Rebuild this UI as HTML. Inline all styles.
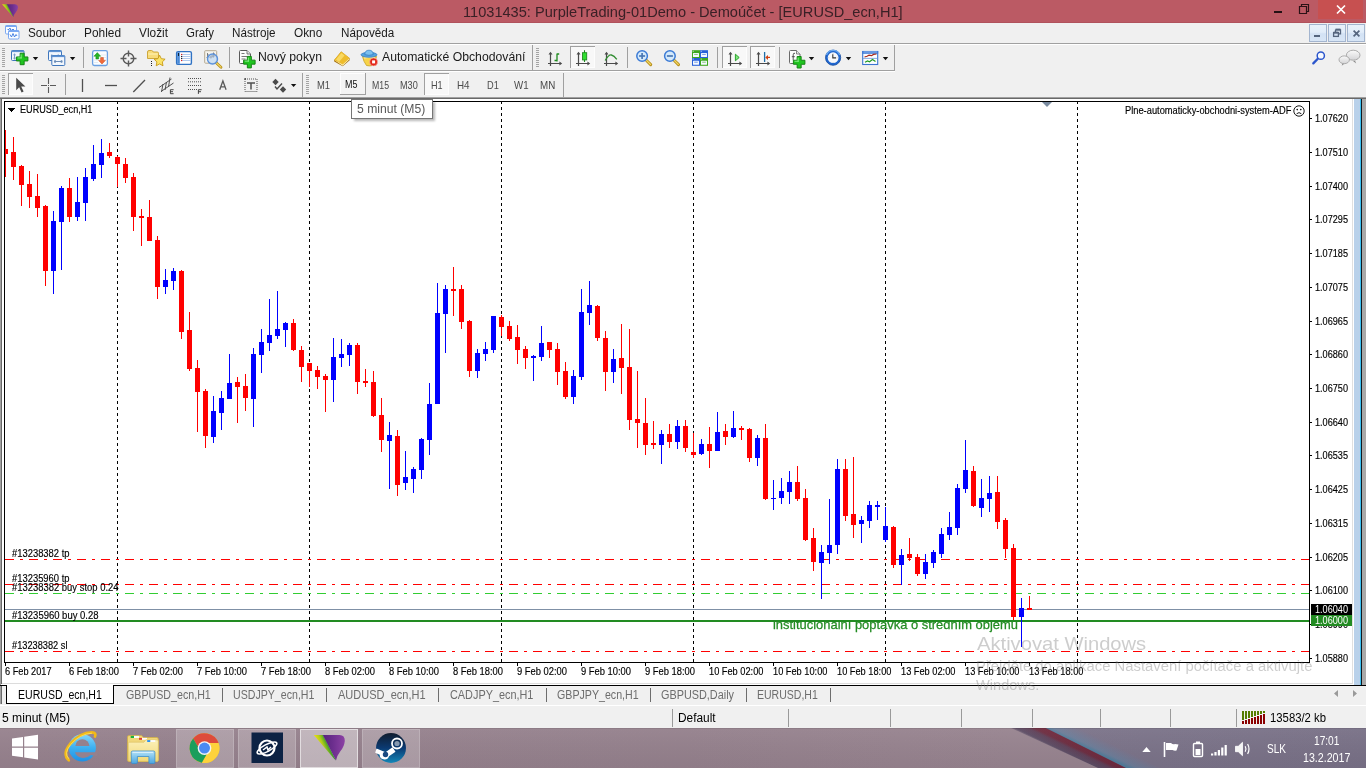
<!DOCTYPE html>
<html><head><meta charset="utf-8"><title>MT4</title>
<style>
*{margin:0;padding:0;box-sizing:border-box}
html,body{width:1366px;height:768px;overflow:hidden;background:#f0f0f0;font-family:"Liberation Sans",sans-serif}
#root{position:relative;width:1366px;height:768px;overflow:hidden;background:#f0f0f0}
.t{position:absolute;white-space:nowrap;line-height:1;transform-origin:0 50%;display:block}
.r{position:absolute}
svg{position:absolute;overflow:visible}
</style></head><body><div id="root">

<div class="r" style="left:0px;top:0px;width:1366px;height:23px;background:#bb5a64;"></div>
<div class="r" style="left:0px;top:22px;width:1366px;height:1px;background:#b0525c;"></div>
<svg style="left:2px;top:4px" width="17" height="14" viewBox="0 0 17 14" ><defs><linearGradient id="apg" x1="0" x2="1" y1="0" y2="0"><stop offset="0" stop-color="#55247a"/><stop offset="0.5" stop-color="#6c2e8e"/><stop offset="1" stop-color="#8c42a4"/></linearGradient>
<linearGradient id="apy" gradientUnits="userSpaceOnUse" x1="1" y1="3" x2="6" y2="0.5"><stop offset="0" stop-color="#ece010"/><stop offset="0.45" stop-color="#b4cc18"/><stop offset="1" stop-color="#2a962c"/></linearGradient></defs>
<path d="M0 0.200H5L11.500 12.900L10.800 12.500z" fill="url(#apy)"/>
<path d="M4.900 0.200H12.500Q16.200 0.300 16 3.600Q15.700 6.400 13.700 8.600Q12 10.500 11.500 12.900z" fill="url(#apg)"/></svg>
<span class="t" style="left:462.80px;top:4px;font-size:15px;color:#3a2026;transform:scaleX(0.9728);">11031435: PurpleTrading-01Demo - Demoúčet - [EURUSD_ecn,H1]</span>
<div class="r" style="left:1274px;top:11px;width:8px;height:2px;background:#241014;"></div>
<svg style="left:1298px;top:3px" width="13" height="12" viewBox="0 0 13 12"><path d="M1.5 3.5h7v7h-7z M3.5 3.5v-2h7v7h-2" fill="none" stroke="#2a1216" stroke-width="1.2"/></svg>
<div class="r" style="left:1318px;top:0px;width:45px;height:19px;background:#c75050;"></div>
<svg style="left:1336px;top:5px" width="10" height="9" viewBox="0 0 10 9"><path d="M1 0.5L9 8.5M9 0.5L1 8.5" stroke="#fff" stroke-width="1.7" fill="none"/></svg>
<div class="r" style="left:0px;top:23px;width:1366px;height:20px;background:#f0f0f0;"></div>
<svg style="left:5px;top:25px" width="15" height="15" viewBox="0 0 15 15" ><rect x="0.5" y="0.5" width="11" height="8.500" rx="1.200" fill="#fbfdff" stroke="#5a92ee" stroke-width="0.800"/>
<rect x="0.500" y="0.500" width="11" height="1.500" fill="#7aa8f2"/>
<path d="M2.500 4.500l1.500 0 1-1.500 1 3 1-1.500h2" fill="none" stroke="#3a78e0" stroke-width="0.900"/>
<rect x="3.500" y="5.500" width="10.500" height="8.500" rx="1.200" fill="#fbfdff" stroke="#5a92ee" stroke-width="0.800"/>
<rect x="3.500" y="5.500" width="10.500" height="1.500" fill="#7aa8f2"/>
<path d="M5 9.500l1.500 2.500 1.500-3.500 1.500 3.500 1.500-2.500 1 1.500" fill="none" stroke="#3a78e0" stroke-width="0.900"/></svg>
<span class="t" style="left:28.00px;top:27px;font-size:12.5px;color:#1a1a1a;transform:scaleX(0.9427);">Soubor</span>
<span class="t" style="left:84.00px;top:27px;font-size:12.5px;color:#1a1a1a;transform:scaleX(0.9506);">Pohled</span>
<span class="t" style="left:139.00px;top:27px;font-size:12.5px;color:#1a1a1a;transform:scaleX(0.9487);">Vložit</span>
<span class="t" style="left:186.00px;top:27px;font-size:12.5px;color:#1a1a1a;transform:scaleX(0.9162);">Grafy</span>
<span class="t" style="left:232.00px;top:27px;font-size:12.5px;color:#1a1a1a;transform:scaleX(0.9345);">Nástroje</span>
<span class="t" style="left:294.40px;top:27px;font-size:12.5px;color:#1a1a1a;transform:scaleX(0.9439);">Okno</span>
<span class="t" style="left:341.40px;top:27px;font-size:12.5px;color:#1a1a1a;transform:scaleX(0.9335);">Nápověda</span>
<div class="r" style="left:1309px;top:24px;width:18px;height:18px;background:linear-gradient(#e8f1fb 0%,#e2edf9 45%,#d3e2f4 55%,#d8e6f6 100%);border:1px solid #a3b5cf"></div>
<div class="r" style="left:1328px;top:24px;width:18px;height:18px;background:linear-gradient(#e8f1fb 0%,#e2edf9 45%,#d3e2f4 55%,#d8e6f6 100%);border:1px solid #a3b5cf"></div>
<div class="r" style="left:1347px;top:24px;width:18px;height:18px;background:linear-gradient(#e8f1fb 0%,#e2edf9 45%,#d3e2f4 55%,#d8e6f6 100%);border:1px solid #a3b5cf"></div>
<div class="r" style="left:1314px;top:35px;width:6px;height:2px;background:#55657e;"></div>
<svg style="left:1332px;top:28px" width="10" height="10" viewBox="0 0 10 10"><path d="M3.500 1.800h5v4h-1.500 M3.500 4v-2.200" fill="none" stroke="#55657e" stroke-width="1.300"/><path d="M3.500 1.500h5" stroke="#55657e" stroke-width="1.800"/><rect x="1.600" y="4.600" width="4.800" height="3.800" fill="none" stroke="#55657e" stroke-width="1.300"/><path d="M1.600 4.600h4.800" stroke="#55657e" stroke-width="1.900"/></svg>
<svg style="left:1353px;top:30px" width="7" height="7" viewBox="0 0 7 7"><path d="M0.600 0.600L6.400 6.400M6.400 0.600L0.600 6.400" stroke="#55657e" stroke-width="1.700" fill="none"/></svg>
<div class="r" style="left:0px;top:43px;width:1366px;height:1px;background:#a0a0a0;"></div>
<div class="r" style="left:0px;top:44px;width:1366px;height:1px;background:#ffffff;"></div>
<div class="r" style="left:0px;top:70px;width:895px;height:1px;background:#a0a0a0;"></div>
<div class="r" style="left:0px;top:71px;width:895px;height:1px;background:#ffffff;"></div>
<div class="r" style="left:894px;top:45px;width:1px;height:26px;background:#a0a0a0;"></div>
<svg style="left:0;top:0" width="900" height="72" viewBox="0 0 900 72"><rect x="2" y="48" width="3" height="1" fill="#a4a4a4"/><rect x="2" y="50" width="3" height="1" fill="#a4a4a4"/><rect x="2" y="52" width="3" height="1" fill="#a4a4a4"/><rect x="2" y="54" width="3" height="1" fill="#a4a4a4"/><rect x="2" y="56" width="3" height="1" fill="#a4a4a4"/><rect x="2" y="58" width="3" height="1" fill="#a4a4a4"/><rect x="2" y="60" width="3" height="1" fill="#a4a4a4"/><rect x="2" y="62" width="3" height="1" fill="#a4a4a4"/><rect x="2" y="64" width="3" height="1" fill="#a4a4a4"/><rect x="2" y="66" width="3" height="1" fill="#a4a4a4"/><rect x="11.5" y="50.5" width="12.500" height="10" rx="1" fill="#f2f7fd" stroke="#3f76bc"/><rect x="11.500" y="50.500" width="12.500" height="1.600" fill="#5f92d2"/><path d="M14.500 54v5" stroke="#7a9cc6" stroke-width="1"/><path d="M13 55.200L14.500 53.200L16 55.200z M13 57.800L14.500 59.800L16 57.800z" fill="#7a9cc6"/><path d="M20.15 53.2h4v3.75h3.75v4h-3.75v3.75h-4v-3.75h-3.75v-4h3.75z" fill="#1fc41f" stroke="#158515" stroke-width="1" stroke-linejoin="round"/><path d="M21.15 54.400000000000006v4.05M17.599999999999998 57.95h4.05" stroke="#8ff08f" stroke-width="0.9" fill="none"/><path d="M32.8 57h5.400l-2.700 3.200z" fill="#111"/><rect x="48.5" y="50.5" width="13" height="10" rx="1" fill="#f2f7fd" stroke="#3f76bc"/><rect x="48.500" y="50.500" width="13" height="1.600" fill="#5f92d2"/><path d="M51.5 56H58.5" stroke="#6a8cb8" stroke-width="1"/><path d="M52.5 54.5L50.5 56L52.5 57.5z M57.5 54.5L59.5 56L57.5 57.5z" fill="#6a8cb8"/><path d="M51.500 54.500v3M58.500 54.500v3" stroke="#6a8cb8" stroke-width="0.800"/><rect x="51.800" y="55.500" width="13" height="10" rx="1" fill="#f2f7fd" stroke="#3f76bc"/><rect x="51.800" y="55.500" width="13" height="1.600" fill="#5f92d2"/><path d="M54.8 61.5H61.8" stroke="#6a8cb8" stroke-width="1"/><path d="M55.8 60.0L53.8 61.5L55.8 63.0z M60.8 60.0L62.8 61.5L60.8 63.0z" fill="#6a8cb8"/><path d="M54.800 60v3M61.800 60v3" stroke="#6a8cb8" stroke-width="0.800"/><path d="M69.9 57h5.400l-2.700 3.200z" fill="#111"/><rect x="83" y="47" width="1" height="21" fill="#a0a0a0"/><rect x="92.600" y="50.700" width="14.800" height="14.800" rx="1.800" fill="#fbfdff" stroke="#6aa0e2" stroke-width="1.300"/><path d="M101 55h5m-5 2.500h5m-5 2.500h5M94 60h4m-4 2.500h4" stroke="#dde6f0" stroke-width="0.800"/><path d="M97.300 52.600l3.400 3.600h-2v2.800h-2.800v-2.800h-2z" fill="#25b425" stroke="#178a17" stroke-width="0.500"/><path d="M102 64l-3.400-3.600h2v-2.800h2.800v2.800h2z" fill="#f26a3a" stroke="#c84818" stroke-width="0.500"/><circle cx="128.500" cy="58.500" r="5.300" fill="none" stroke="#5a5a5a" stroke-width="1.400"/><path d="M128.500 50.500v6m0 4v6M120.500 58.500h6m4 0h6" stroke="#5a5a5a" stroke-width="1.400"/><path d="M147.500 58.500v-6.500q0-1.500 1.500-1.500h2.500q1.200 0 1.800 1.500h4q1.200 0 1.200 1.200v5.300z" fill="#f8dc7a" stroke="#c9a030" stroke-width="0.900"/><path d="M148.200 54h9.600" stroke="#fff3b8" stroke-width="1"/><path d="M151.500 61v5.500" stroke="#222" stroke-width="1" stroke-dasharray="1 1"/><path d="M159.600 55.200l1.700 3.500 3.800.5-2.800 2.700.7 3.900-3.400-1.900-3.400 1.900.7-3.900-2.800-2.700 3.800-.5z" fill="#fbe468" stroke="#c89a14" stroke-width="0.900" stroke-linejoin="round"/><rect x="176.600" y="51.600" width="14.800" height="12.800" rx="1.500" fill="#ffffff" stroke="#2f72c4" stroke-width="1.400"/><rect x="177.200" y="52.200" width="2.600" height="11.600" fill="#4a8ad8"/><rect x="178" y="53" width="1" height="3" fill="#123"/><path d="M181.500 54.500h9m-9 2h9m-9 2h9m-9 2h9" stroke="#9cbce8" stroke-width="0.800"/><rect x="181" y="53.900" width="1.200" height="1.200" fill="#e02020"/><rect x="181" y="55.900" width="1.200" height="1.200" fill="#222"/><rect x="181" y="57.900" width="1.200" height="1.200" fill="#222"/><rect x="181" y="59.900" width="1.200" height="1.200" fill="#e02020"/><rect x="204.700" y="50.700" width="12" height="12.500" rx="0.800" fill="#f6f4ee" stroke="#b4a890" stroke-width="1"/><path d="M207.500 53v6m-1-1.500h1m0-3h1 M213.500 52.500v5m-1-1h1m0-3h1" stroke="#666" stroke-width="0.800" fill="none"/><path d="M216.200 62.700l4.800 4.500" stroke="#b8901c" stroke-width="2.800" stroke-linecap="round"/><path d="M216.400 62.900l4.500 4.200" stroke="#f4da66" stroke-width="1.200" stroke-linecap="round"/><circle cx="212.500" cy="59" r="5" fill="#c6dcf4" fill-opacity="0.800" stroke="#5b92dc" stroke-width="1.400"/><path d="M210 58q2-3 4.500-1.500" stroke="#8a98a8" stroke-width="2.500" fill="none" stroke-opacity="0.600"/><rect x="229" y="47" width="1" height="21" fill="#a0a0a0"/><path d="M239.500 51.500q0-1 1-1h6.500l3.500 3.500v8.500q0 1-1 1h-9q-1 0-1-1z" fill="#fdfdfd" stroke="#5a5a5a" stroke-width="1"/><path d="M247 50.500v3.500h3.500" fill="#e8e8e8" stroke="#5a5a5a" stroke-width="0.800"/><path d="M241.500 53.500h3m-3 3h6m-6 2.500h4" stroke="#777" stroke-width="1"/><path d="M247.35 56.4h4v3.75h3.75v4h-3.75v3.75h-4v-3.75h-3.75v-4h3.75z" fill="#1fc41f" stroke="#158515" stroke-width="1" stroke-linejoin="round"/><path d="M248.35 57.6v4.05M244.79999999999998 61.15h4.05" stroke="#8ff08f" stroke-width="0.9" fill="none"/><path d="M334.200 59.900L341.200 51.500L349.700 58.300L349.700 60.300L342.700 66.200L334.200 61.600z" fill="#a87410"/><path d="M335 60.600L342 52.600L349.700 58.900L342.700 65.700z" fill="#fdf3c0"/><path d="M334.200 59.900L341.200 51.500L349.700 58.300L342.700 64.600z" fill="#eebc2c"/><path d="M336 59.600L341.400 53L344.500 55.500L339 62z" fill="#fbe070" fill-opacity="0.800"/><path d="M362.500 56.500q7-3 14 0q-1 5-4 9q-3 .800-6 0q-3-4-4-9z" fill="#f7d348" stroke="#c8a020" stroke-width="0.800"/><path d="M364 58q5-1.500 11 0" stroke="#fbeb9a" stroke-width="1.500" fill="none"/><ellipse cx="369" cy="54.800" rx="8" ry="2.500" fill="#56a4e0" stroke="#2e78c0" stroke-width="0.700"/><path d="M364.800 54.600q0-4.400 4.200-4.400t4.200 4.400q-4.200 1.400-8.400 0z" fill="#7cc0ee" stroke="#2e78c0" stroke-width="0.700"/><circle cx="373.600" cy="61.900" r="4" fill="#e32618" stroke="#f8c0b8" stroke-width="0.600"/><rect x="372.100" y="60.400" width="3" height="3" fill="#fff"/><rect x="532" y="45" width="1" height="26" fill="#a0a0a0"/><rect x="536" y="48" width="3" height="1" fill="#a4a4a4"/><rect x="536" y="50" width="3" height="1" fill="#a4a4a4"/><rect x="536" y="52" width="3" height="1" fill="#a4a4a4"/><rect x="536" y="54" width="3" height="1" fill="#a4a4a4"/><rect x="536" y="56" width="3" height="1" fill="#a4a4a4"/><rect x="536" y="58" width="3" height="1" fill="#a4a4a4"/><rect x="536" y="60" width="3" height="1" fill="#a4a4a4"/><rect x="536" y="62" width="3" height="1" fill="#a4a4a4"/><rect x="536" y="64" width="3" height="1" fill="#a4a4a4"/><rect x="536" y="66" width="3" height="1" fill="#a4a4a4"/><path d="M550.5 53V66.1 M548 63.5H561" stroke="#4a4a4a" stroke-width="1.2" fill="none"/><path d="M548.5 54.6L550.5 51.8L552.5 54.6z M559.4 61.5L562.2 63.5L559.4 65.5z" fill="#4a4a4a"/><path d="M557 53.500v8m-2.500-1h2.500m0-6.500h2.200" stroke="#1e8a1e" stroke-width="1.300" fill="none"/><rect x="570" y="46" width="25" height="22" fill="#f8f8f8"/><rect x="570" y="46" width="25" height="1" fill="#a0a0a0"/><rect x="570" y="46" width="1" height="22" fill="#a0a0a0"/><rect x="594" y="47" width="1" height="21" fill="#fdfdfd"/><rect x="571" y="67" width="24" height="1" fill="#fdfdfd"/><path d="M578.5 53V66.1 M576 63.5H589" stroke="#4a4a4a" stroke-width="1.2" fill="none"/><path d="M576.5 54.6L578.5 51.8L580.5 54.6z M587.4 61.5L590.2 63.5L587.4 65.5z" fill="#4a4a4a"/><path d="M584.500 50.200v11.800" stroke="#1e8a1e" stroke-width="1.100"/><rect x="582.500" y="52.700" width="4.200" height="7.200" fill="#2fe02f" stroke="#1e8a1e" stroke-width="0.900"/><path d="M606.5 53V66.1 M604 63.5H617" stroke="#4a4a4a" stroke-width="1.2" fill="none"/><path d="M604.5 54.6L606.5 51.8L608.5 54.6z M615.4 61.5L618.2 63.5L615.4 65.5z" fill="#4a4a4a"/><path d="M605.200 60.500q3.500-6 6.200-5.500t5.400 4.400" stroke="#2e8b2e" stroke-width="1.300" fill="none"/><rect x="627" y="47" width="1" height="21" fill="#a0a0a0"/><path d="M646.3000000000001 60.2L650.7 64.6" stroke="#b8901c" stroke-width="3" stroke-linecap="round"/><path d="M646.5 60.4L650.5 64.4" stroke="#f4da66" stroke-width="1.300" stroke-linecap="round"/><circle cx="642.1" cy="56" r="5.300" fill="#d4e9fb" stroke="#3b7bd6" stroke-width="1.500"/><path d="M639.1 56h6" stroke="#4a78b4" stroke-width="1.700"/><path d="M642.1 53v6" stroke="#4a78b4" stroke-width="1.700"/><path d="M674.1 60.2L678.5 64.6" stroke="#b8901c" stroke-width="3" stroke-linecap="round"/><path d="M674.3 60.4L678.3 64.4" stroke="#f4da66" stroke-width="1.300" stroke-linecap="round"/><circle cx="669.9" cy="56" r="5.300" fill="#d4e9fb" stroke="#3b7bd6" stroke-width="1.500"/><path d="M666.9 56h6" stroke="#4a78b4" stroke-width="1.700"/><rect x="692" y="50.2" width="8" height="7.800" fill="#3fa81f"/><rect x="692.7" y="50.800000000000004" width="1" height="1" fill="#fff" fill-opacity="0.800"/><rect x="693" y="53.0" width="6" height="4" rx="0.500" fill="#f4f9ff"/><path d="M694.2 54.400000000000006h3.600" stroke="#3fa81f" stroke-width="0.900" stroke-opacity="0.700"/><rect x="700" y="50.2" width="8" height="7.800" fill="#2860d8"/><rect x="700.7" y="50.800000000000004" width="1" height="1" fill="#fff" fill-opacity="0.800"/><rect x="701" y="53.0" width="6" height="4" rx="0.500" fill="#f4f9ff"/><path d="M702.2 54.400000000000006h3.600" stroke="#2860d8" stroke-width="0.900" stroke-opacity="0.700"/><rect x="692" y="58" width="8" height="7.800" fill="#2860d8"/><rect x="692.7" y="58.6" width="1" height="1" fill="#fff" fill-opacity="0.800"/><rect x="693" y="60.8" width="6" height="4" rx="0.500" fill="#f4f9ff"/><path d="M694.2 62.2h3.600" stroke="#2860d8" stroke-width="0.900" stroke-opacity="0.700"/><rect x="700" y="58" width="8" height="7.800" fill="#3fa81f"/><rect x="700.7" y="58.6" width="1" height="1" fill="#fff" fill-opacity="0.800"/><rect x="701" y="60.8" width="6" height="4" rx="0.500" fill="#f4f9ff"/><path d="M702.2 62.2h3.600" stroke="#3fa81f" stroke-width="0.900" stroke-opacity="0.700"/><rect x="717" y="47" width="1" height="21" fill="#a0a0a0"/><rect x="722" y="46" width="25" height="22" fill="#f8f8f8"/><rect x="722" y="46" width="25" height="1" fill="#a0a0a0"/><rect x="722" y="46" width="1" height="22" fill="#a0a0a0"/><rect x="746" y="47" width="1" height="21" fill="#fdfdfd"/><rect x="723" y="67" width="24" height="1" fill="#fdfdfd"/><path d="M730.5 53V66.1 M728 63.5H741" stroke="#4a4a4a" stroke-width="1.2" fill="none"/><path d="M728.5 54.6L730.5 51.8L732.5 54.6z M739.4 61.5L742.2 63.5L739.4 65.5z" fill="#4a4a4a"/><path d="M735.400 54.200l3.800 3.300-3.800 3.300z" fill="#7fe87f" stroke="#1e9a1e" stroke-width="0.900"/><rect x="750" y="46" width="25" height="22" fill="#f8f8f8"/><rect x="750" y="46" width="25" height="1" fill="#a0a0a0"/><rect x="750" y="46" width="1" height="22" fill="#a0a0a0"/><rect x="774" y="47" width="1" height="21" fill="#fdfdfd"/><rect x="751" y="67" width="24" height="1" fill="#fdfdfd"/><path d="M758.5 53V66.1 M756 63.5H769" stroke="#4a4a4a" stroke-width="1.2" fill="none"/><path d="M756.5 54.6L758.5 51.8L760.5 54.6z M767.4 61.5L770.2 63.5L767.4 65.5z" fill="#4a4a4a"/><path d="M764.600 52v10" stroke="#1f6fa8" stroke-width="1.300"/><path d="M770 57.400h-3.500" stroke="#d04010" stroke-width="1.200"/><path d="M768 54.900L765.300 57.400L768 59.900z" fill="#d04010"/><rect x="779" y="47" width="1" height="21" fill="#a0a0a0"/><path d="M789.500 51.500q0-1 1-1h6l3.500 3.500v8.500q0 1-1 1h-8.500q-1 0-1-1z" fill="#fdfdfd" stroke="#6a6a6a" stroke-width="1"/><path d="M796.500 50.500v3.500h3.500" fill="#e8e8e8" stroke="#6a6a6a" stroke-width="0.800"/><path d="M795 53.300q-1.800-.600-1.800 1.500v5.500m-1.400-3.600h3" stroke="#444" stroke-width="0.900" fill="none"/><path d="M797.15 56.5h4v3.75h3.75v4h-3.75v3.75h-4v-3.75h-3.75v-4h3.75z" fill="#1fc41f" stroke="#158515" stroke-width="1" stroke-linejoin="round"/><path d="M798.15 57.7v4.05M794.6 61.25h4.05" stroke="#8ff08f" stroke-width="0.9" fill="none"/><path d="M808.8 57h5.400l-2.700 3.200z" fill="#111"/><circle cx="833.100" cy="57.700" r="7.600" fill="#1f66d0" stroke="#154a9c" stroke-width="0.800"/><path d="M826.500 55a7 7 0 0 1 13.200 0" stroke="#6aa8f0" stroke-width="1.200" fill="none"/><circle cx="833.100" cy="57.700" r="5.400" fill="#f6f8fb"/><path d="M833.100 53v.800m0 8.200v.800m-4.700-5.100h.800m8.200 0h.800" stroke="#b0b8c4" stroke-width="0.700"/><path d="M832.800 54.300v3.600h3.300" stroke="#333" stroke-width="1.100" fill="none"/><path d="M845.8 57h5.400l-2.700 3.200z" fill="#111"/><rect x="862.700" y="51.500" width="15" height="13" fill="#fbfdff" stroke="#3a74d0" stroke-width="1.100"/><rect x="862.200" y="51" width="16" height="2.800" fill="#3f7ad6"/><rect x="863.500" y="51.600" width="13.500" height="0.800" fill="#a8c8f4"/><path d="M863 58.400h14.500" stroke="#6a98d8" stroke-width="0.800"/><path d="M864.500 57l2.500-.800 2-1 2.500.500 2-1.300 3-.400" stroke="#a82818" stroke-width="1.200" fill="none"/><path d="M865 62.200l2.500-1.200 2 .800 3-2.200 3 2" stroke="#229a22" stroke-width="1.200" fill="none"/><path d="M882.8 57h5.400l-2.700 3.200z" fill="#111"/></svg>
<span class="t" style="left:257.60px;top:51px;font-size:12px;color:#1a1a1a;transform:scaleX(1.0208);">Nový pokyn</span>
<span class="t" style="left:382.00px;top:51px;font-size:12px;color:#1a1a1a;transform:scaleX(1.0188);">Automatické Obchodování</span>
<svg style="left:1312px;top:50.5px" width="14" height="15" viewBox="0 0 14 15" ><path d="M1.300 12.400L5.800 7.800" stroke="#2c56cc" stroke-width="2.300" stroke-linecap="round"/><circle cx="8.800" cy="4.700" r="3.600" fill="#f6f9ff" stroke="#2c56cc" stroke-width="1.500"/></svg><svg style="left:1338px;top:49px" width="24" height="18" viewBox="0 0 24 18" ><defs><linearGradient id="chg" x1="0" x2="0" y1="0" y2="1"><stop offset="0" stop-color="#fafafa"/><stop offset="1" stop-color="#d4d4d6"/></linearGradient></defs><path d="M17 11.800l1.200 2.600-3.200-2.400z" fill="#8a8a8a"/><ellipse cx="15.200" cy="6.200" rx="6.800" ry="5" fill="url(#chg)" stroke="#a4a4a4" stroke-width="0.900"/><path d="M4.500 14.200l-.800 2.600 3-2.200z" fill="#8a8a8a"/><ellipse cx="6.200" cy="10.800" rx="5.200" ry="3.900" fill="url(#chg)" stroke="#a4a4a4" stroke-width="0.900"/></svg>
<svg style="left:0;top:0" width="900" height="99" viewBox="0 0 900 99"><rect x="2" y="75" width="3" height="1" fill="#a4a4a4"/><rect x="2" y="77" width="3" height="1" fill="#a4a4a4"/><rect x="2" y="79" width="3" height="1" fill="#a4a4a4"/><rect x="2" y="81" width="3" height="1" fill="#a4a4a4"/><rect x="2" y="83" width="3" height="1" fill="#a4a4a4"/><rect x="2" y="85" width="3" height="1" fill="#a4a4a4"/><rect x="2" y="87" width="3" height="1" fill="#a4a4a4"/><rect x="2" y="89" width="3" height="1" fill="#a4a4a4"/><rect x="2" y="91" width="3" height="1" fill="#a4a4a4"/><rect x="2" y="93" width="3" height="1" fill="#a4a4a4"/><rect x="8" y="73" width="25" height="22" fill="#f8f8f8"/><rect x="8" y="73" width="25" height="1" fill="#a0a0a0"/><rect x="8" y="73" width="1" height="22" fill="#a0a0a0"/><rect x="32" y="74" width="1" height="21" fill="#fdfdfd"/><rect x="9" y="94" width="24" height="1" fill="#fdfdfd"/><path d="M16.200 77.800v12.400l3-2.900 2.400 5.200 2-1-2.400-5h4.200z" fill="#4a4a4a"/><path d="M48.500 78v6m0 3v6M41 85.500h6m3 0h6" stroke="#5a5a5a" stroke-width="1.100"/><rect x="48" y="85" width="1" height="1" fill="#5a5a5a"/><rect x="65" y="74" width="1" height="21" fill="#a0a0a0"/><path d="M82.500 79v13" stroke="#505050" stroke-width="1.300"/><path d="M105 85.500h12" stroke="#505050" stroke-width="1.300"/><path d="M133.300 92L145 80" stroke="#505050" stroke-width="1.300"/><path d="M159 87.500l12.500-8.500M161 91.500l12.500-8.500" stroke="#505050" stroke-width="1"/><path d="M163 84l-1.500 8m5-10l-1.500 8m5-12.500l-1.500 9.500" stroke="#505050" stroke-width="1"/><path d="M173.600 89.700h-3.200v4h3.200m-3.200-2h2.600" stroke="#333" stroke-width="0.900" fill="none"/><path d="M188 78.500h13m-13 3.300h13m-13 3.700h13m-13 4h9" stroke="#505050" stroke-width="1" stroke-dasharray="1 1"/><path d="M201.600 89.700h-3.200v4.200m0-2.200h2.600" stroke="#333" stroke-width="0.900" fill="none"/><path d="M219.700 89.800l3.200-8.800 3.200 8.800m-5.300-3h4.200" stroke="#5a5a5a" stroke-width="1.300" fill="none"/><rect x="245" y="79" width="12" height="12.500" fill="none" stroke="#505050" stroke-width="1" stroke-dasharray="1 1"/><path d="M247 83h8m-4 0v6.500" stroke="#505050" stroke-width="1.500" fill="none"/><rect x="244.300" y="78.300" width="1.600" height="1.200" fill="#333"/><path d="M275.500 78.800l3.200 3.200-3.200 3.200-3.200-3.200z" fill="#4a4a4a"/><path d="M283 86.300l3.200 3.200-3.200 3.200-3.200-3.200z" fill="#4a4a4a"/><path d="M275 86.500l2 2.500 5-5.500" stroke="#4a4a4a" stroke-width="1.400" fill="none"/><path d="M290.9 83.9h5.400l-2.700 3.200z" fill="#111"/><rect x="302" y="73" width="1" height="24" fill="#a0a0a0"/><rect x="306" y="75" width="3" height="1" fill="#a4a4a4"/><rect x="306" y="77" width="3" height="1" fill="#a4a4a4"/><rect x="306" y="79" width="3" height="1" fill="#a4a4a4"/><rect x="306" y="81" width="3" height="1" fill="#a4a4a4"/><rect x="306" y="83" width="3" height="1" fill="#a4a4a4"/><rect x="306" y="85" width="3" height="1" fill="#a4a4a4"/><rect x="306" y="87" width="3" height="1" fill="#a4a4a4"/><rect x="306" y="89" width="3" height="1" fill="#a4a4a4"/><rect x="306" y="91" width="3" height="1" fill="#a4a4a4"/><rect x="306" y="93" width="3" height="1" fill="#a4a4a4"/><rect x="340" y="73" width="26" height="22" fill="#f4f4f4"/><rect x="340" y="73" width="26" height="1" fill="#fdfdfd"/><rect x="340" y="73" width="1" height="22" fill="#fdfdfd"/><rect x="365" y="73" width="1" height="22" fill="#a0a0a0"/><rect x="340" y="94" width="26" height="1" fill="#a0a0a0"/><rect x="424" y="73" width="25" height="22" fill="#f8f8f8"/><rect x="424" y="73" width="25" height="1" fill="#a0a0a0"/><rect x="424" y="73" width="1" height="22" fill="#a0a0a0"/><rect x="448" y="74" width="1" height="21" fill="#fdfdfd"/><rect x="425" y="94" width="24" height="1" fill="#fdfdfd"/><rect x="563" y="73" width="1" height="24" fill="#a0a0a0"/></svg>
<span class="t" style="left:317.40px;top:80px;font-size:10.5px;color:#4a4a4a;transform:scaleX(0.8912);">M1</span>
<span class="t" style="left:344.60px;top:79px;font-size:10.5px;color:#111;transform:scaleX(0.8501);">M5</span>
<span class="t" style="left:372.00px;top:80px;font-size:10.5px;color:#4a4a4a;transform:scaleX(0.8322);">M15</span>
<span class="t" style="left:399.60px;top:80px;font-size:10.5px;color:#4a4a4a;transform:scaleX(0.8714);">M30</span>
<span class="t" style="left:431.00px;top:80px;font-size:10.5px;color:#4a4a4a;transform:scaleX(0.8642);">H1</span>
<span class="t" style="left:457.40px;top:80px;font-size:10.5px;color:#4a4a4a;transform:scaleX(0.9387);">H4</span>
<span class="t" style="left:486.60px;top:80px;font-size:10.5px;color:#4a4a4a;transform:scaleX(0.8791);">D1</span>
<span class="t" style="left:514.00px;top:80px;font-size:10.5px;color:#4a4a4a;transform:scaleX(0.9270);">W1</span>
<span class="t" style="left:540.40px;top:80px;font-size:10.5px;color:#4a4a4a;transform:scaleX(0.9308);">MN</span>
<div class="r" style="left:0px;top:97px;width:1366px;height:1px;background:#a0a0a0;"></div>
<div class="r" style="left:0px;top:98px;width:1366px;height:1px;background:#696969;"></div>
<div class="r" style="left:0px;top:99px;width:1354px;height:586px;background:#ffffff;"></div>
<div class="r" style="left:2px;top:683px;width:1351px;height:1px;background:#dcdcdc;"></div>
<div class="r" style="left:2px;top:684px;width:1352px;height:1px;background:#ffffff;"></div>
<div class="r" style="left:0px;top:99px;width:1px;height:586px;background:#a0a0a0;"></div>
<div class="r" style="left:1px;top:99px;width:1px;height:585px;background:#696969;"></div>
<div class="r" style="left:1354px;top:99px;width:6px;height:586px;background:#b9d1ea;"></div>
<div class="r" style="left:1360px;top:99px;width:1px;height:586px;background:#3cc0f0;"></div>
<div class="r" style="left:1352px;top:99px;width:1px;height:585px;background:#e0e0e0;"></div>
<div class="r" style="left:1353px;top:99px;width:1px;height:586px;background:#ffffff;"></div>
<div class="r" style="left:1361px;top:99px;width:1px;height:586px;background:#101820;"></div>
<div class="r" style="left:1362px;top:99px;width:4px;height:586px;background:#a9a9a9;"></div>
<svg style="left:0;top:0" width="1366" height="768" viewBox="0 0 1366 768" shape-rendering="crispEdges">
<line x1="117.5" y1="101" x2="117.5" y2="662" stroke="#000" stroke-width="1" stroke-dasharray="3 3"/>
<line x1="309.5" y1="101" x2="309.5" y2="662" stroke="#000" stroke-width="1" stroke-dasharray="3 3"/>
<line x1="501.5" y1="101" x2="501.5" y2="662" stroke="#000" stroke-width="1" stroke-dasharray="3 3"/>
<line x1="693.5" y1="101" x2="693.5" y2="662" stroke="#000" stroke-width="1" stroke-dasharray="3 3"/>
<line x1="885.5" y1="101" x2="885.5" y2="662" stroke="#000" stroke-width="1" stroke-dasharray="3 3"/>
<line x1="1077.5" y1="101" x2="1077.5" y2="662" stroke="#000" stroke-width="1" stroke-dasharray="3 3"/>
<line x1="5" y1="559.5" x2="1309" y2="559.5" stroke="#ff0000" stroke-width="1" stroke-dasharray="9 6 3 6"/>
<line x1="5" y1="584.5" x2="1309" y2="584.5" stroke="#ff0000" stroke-width="1" stroke-dasharray="9 6 3 6"/>
<line x1="5" y1="651.5" x2="1309" y2="651.5" stroke="#ff0000" stroke-width="1" stroke-dasharray="9 6 3 6"/>
<line x1="5" y1="593.5" x2="1309" y2="593.5" stroke="#32cd32" stroke-width="1" stroke-dasharray="9 6 3 6"/>
<rect x="5" y="609" width="1304" height="1" fill="#7f90a6"/>
<rect x="5" y="620" width="1304" height="2" fill="#228b22"/>
<rect x="5" y="130" width="1" height="47" fill="#ff0000"/>
<rect x="5" y="149" width="3" height="5" fill="#ff0000"/>
<rect x="13" y="137" width="1" height="43" fill="#ff0000"/>
<rect x="11" y="152" width="5" height="15" fill="#ff0000"/>
<rect x="21" y="165" width="1" height="41" fill="#ff0000"/>
<rect x="19" y="166" width="5" height="19" fill="#ff0000"/>
<rect x="29" y="171" width="1" height="37" fill="#ff0000"/>
<rect x="27" y="184" width="5" height="13" fill="#ff0000"/>
<rect x="37" y="174" width="1" height="43" fill="#ff0000"/>
<rect x="35" y="196" width="5" height="12" fill="#ff0000"/>
<rect x="45" y="205" width="1" height="81" fill="#ff0000"/>
<rect x="43" y="206" width="5" height="65" fill="#ff0000"/>
<rect x="53" y="211" width="1" height="83" fill="#0000ff"/>
<rect x="51" y="221" width="5" height="50" fill="#0000ff"/>
<rect x="61" y="186" width="1" height="84" fill="#0000ff"/>
<rect x="59" y="188" width="5" height="34" fill="#0000ff"/>
<rect x="69" y="178" width="1" height="44" fill="#ff0000"/>
<rect x="67" y="188" width="5" height="29" fill="#ff0000"/>
<rect x="77" y="177" width="1" height="44" fill="#0000ff"/>
<rect x="75" y="202" width="5" height="15" fill="#0000ff"/>
<rect x="85" y="168" width="1" height="53" fill="#0000ff"/>
<rect x="83" y="177" width="5" height="26" fill="#0000ff"/>
<rect x="93" y="145" width="1" height="36" fill="#0000ff"/>
<rect x="91" y="164" width="5" height="15" fill="#0000ff"/>
<rect x="101" y="139" width="1" height="39" fill="#0000ff"/>
<rect x="99" y="153" width="5" height="12" fill="#0000ff"/>
<rect x="109" y="143" width="1" height="15" fill="#ff0000"/>
<rect x="107" y="152" width="5" height="4" fill="#ff0000"/>
<rect x="117" y="156" width="1" height="31" fill="#ff0000"/>
<rect x="115" y="157" width="5" height="7" fill="#ff0000"/>
<rect x="125" y="158" width="1" height="25" fill="#ff0000"/>
<rect x="123" y="164" width="5" height="14" fill="#ff0000"/>
<rect x="133" y="173" width="1" height="58" fill="#ff0000"/>
<rect x="131" y="177" width="5" height="40" fill="#ff0000"/>
<rect x="141" y="209" width="1" height="37" fill="#ff0000"/>
<rect x="139" y="216" width="5" height="2" fill="#ff0000"/>
<rect x="149" y="200" width="1" height="41" fill="#ff0000"/>
<rect x="147" y="217" width="5" height="24" fill="#ff0000"/>
<rect x="157" y="236" width="1" height="63" fill="#ff0000"/>
<rect x="155" y="240" width="5" height="47" fill="#ff0000"/>
<rect x="165" y="269" width="1" height="25" fill="#0000ff"/>
<rect x="163" y="280" width="5" height="7" fill="#0000ff"/>
<rect x="173" y="268" width="1" height="22" fill="#0000ff"/>
<rect x="171" y="271" width="5" height="10" fill="#0000ff"/>
<rect x="181" y="270" width="1" height="69" fill="#ff0000"/>
<rect x="179" y="271" width="5" height="61" fill="#ff0000"/>
<rect x="189" y="312" width="1" height="59" fill="#ff0000"/>
<rect x="187" y="330" width="5" height="39" fill="#ff0000"/>
<rect x="197" y="360" width="1" height="72" fill="#ff0000"/>
<rect x="195" y="368" width="5" height="24" fill="#ff0000"/>
<rect x="205" y="389" width="1" height="59" fill="#ff0000"/>
<rect x="203" y="391" width="5" height="45" fill="#ff0000"/>
<rect x="213" y="396" width="1" height="47" fill="#0000ff"/>
<rect x="211" y="411" width="5" height="26" fill="#0000ff"/>
<rect x="221" y="391" width="1" height="39" fill="#0000ff"/>
<rect x="219" y="398" width="5" height="15" fill="#0000ff"/>
<rect x="229" y="354" width="1" height="45" fill="#0000ff"/>
<rect x="227" y="383" width="5" height="16" fill="#0000ff"/>
<rect x="237" y="377" width="1" height="46" fill="#ff0000"/>
<rect x="235" y="382" width="5" height="5" fill="#ff0000"/>
<rect x="245" y="374" width="1" height="37" fill="#ff0000"/>
<rect x="243" y="386" width="5" height="12" fill="#ff0000"/>
<rect x="253" y="348" width="1" height="79" fill="#0000ff"/>
<rect x="251" y="354" width="5" height="45" fill="#0000ff"/>
<rect x="261" y="329" width="1" height="44" fill="#0000ff"/>
<rect x="259" y="342" width="5" height="13" fill="#0000ff"/>
<rect x="269" y="299" width="1" height="52" fill="#0000ff"/>
<rect x="267" y="335" width="5" height="8" fill="#0000ff"/>
<rect x="277" y="291" width="1" height="48" fill="#0000ff"/>
<rect x="275" y="329" width="5" height="7" fill="#0000ff"/>
<rect x="285" y="322" width="1" height="25" fill="#0000ff"/>
<rect x="283" y="323" width="5" height="7" fill="#0000ff"/>
<rect x="293" y="319" width="1" height="32" fill="#ff0000"/>
<rect x="291" y="323" width="5" height="27" fill="#ff0000"/>
<rect x="301" y="346" width="1" height="36" fill="#ff0000"/>
<rect x="299" y="350" width="5" height="17" fill="#ff0000"/>
<rect x="309" y="363" width="1" height="24" fill="#ff0000"/>
<rect x="307" y="363" width="5" height="8" fill="#ff0000"/>
<rect x="317" y="366" width="1" height="23" fill="#ff0000"/>
<rect x="315" y="370" width="5" height="7" fill="#ff0000"/>
<rect x="325" y="374" width="1" height="38" fill="#ff0000"/>
<rect x="323" y="376" width="5" height="4" fill="#ff0000"/>
<rect x="333" y="338" width="1" height="64" fill="#0000ff"/>
<rect x="331" y="357" width="5" height="23" fill="#0000ff"/>
<rect x="341" y="339" width="1" height="28" fill="#0000ff"/>
<rect x="339" y="354" width="5" height="4" fill="#0000ff"/>
<rect x="349" y="343" width="1" height="23" fill="#0000ff"/>
<rect x="347" y="345" width="5" height="10" fill="#0000ff"/>
<rect x="357" y="343" width="1" height="51" fill="#ff0000"/>
<rect x="355" y="345" width="5" height="37" fill="#ff0000"/>
<rect x="365" y="369" width="1" height="18" fill="#ff0000"/>
<rect x="363" y="381" width="5" height="2" fill="#ff0000"/>
<rect x="373" y="371" width="1" height="46" fill="#ff0000"/>
<rect x="371" y="382" width="5" height="34" fill="#ff0000"/>
<rect x="381" y="398" width="1" height="54" fill="#ff0000"/>
<rect x="379" y="415" width="5" height="25" fill="#ff0000"/>
<rect x="389" y="422" width="1" height="67" fill="#0000ff"/>
<rect x="387" y="435" width="5" height="6" fill="#0000ff"/>
<rect x="397" y="430" width="1" height="66" fill="#ff0000"/>
<rect x="395" y="436" width="5" height="49" fill="#ff0000"/>
<rect x="405" y="451" width="1" height="39" fill="#0000ff"/>
<rect x="403" y="477" width="5" height="6" fill="#0000ff"/>
<rect x="413" y="467" width="1" height="26" fill="#0000ff"/>
<rect x="411" y="469" width="5" height="10" fill="#0000ff"/>
<rect x="421" y="438" width="1" height="41" fill="#0000ff"/>
<rect x="419" y="439" width="5" height="31" fill="#0000ff"/>
<rect x="429" y="383" width="1" height="72" fill="#0000ff"/>
<rect x="427" y="404" width="5" height="36" fill="#0000ff"/>
<rect x="437" y="283" width="1" height="121" fill="#0000ff"/>
<rect x="435" y="313" width="5" height="91" fill="#0000ff"/>
<rect x="445" y="285" width="1" height="68" fill="#0000ff"/>
<rect x="443" y="289" width="5" height="25" fill="#0000ff"/>
<rect x="453" y="267" width="1" height="49" fill="#ff0000"/>
<rect x="451" y="289" width="5" height="2" fill="#ff0000"/>
<rect x="461" y="285" width="1" height="44" fill="#ff0000"/>
<rect x="459" y="289" width="5" height="33" fill="#ff0000"/>
<rect x="469" y="320" width="1" height="57" fill="#ff0000"/>
<rect x="467" y="321" width="5" height="50" fill="#ff0000"/>
<rect x="477" y="349" width="1" height="29" fill="#0000ff"/>
<rect x="475" y="353" width="5" height="18" fill="#0000ff"/>
<rect x="485" y="342" width="1" height="19" fill="#0000ff"/>
<rect x="483" y="349" width="5" height="5" fill="#0000ff"/>
<rect x="493" y="316" width="1" height="37" fill="#0000ff"/>
<rect x="491" y="316" width="5" height="34" fill="#0000ff"/>
<rect x="501" y="315" width="1" height="21" fill="#ff0000"/>
<rect x="499" y="317" width="5" height="10" fill="#ff0000"/>
<rect x="509" y="321" width="1" height="20" fill="#ff0000"/>
<rect x="507" y="326" width="5" height="13" fill="#ff0000"/>
<rect x="517" y="325" width="1" height="39" fill="#ff0000"/>
<rect x="515" y="337" width="5" height="13" fill="#ff0000"/>
<rect x="525" y="346" width="1" height="23" fill="#ff0000"/>
<rect x="523" y="349" width="5" height="9" fill="#ff0000"/>
<rect x="533" y="355" width="1" height="26" fill="#0000ff"/>
<rect x="531" y="356" width="5" height="2" fill="#0000ff"/>
<rect x="541" y="326" width="1" height="35" fill="#0000ff"/>
<rect x="539" y="343" width="5" height="14" fill="#0000ff"/>
<rect x="549" y="342" width="1" height="16" fill="#ff0000"/>
<rect x="547" y="342" width="5" height="8" fill="#ff0000"/>
<rect x="557" y="343" width="1" height="42" fill="#ff0000"/>
<rect x="555" y="349" width="5" height="23" fill="#ff0000"/>
<rect x="565" y="362" width="1" height="37" fill="#ff0000"/>
<rect x="563" y="371" width="5" height="26" fill="#ff0000"/>
<rect x="573" y="370" width="1" height="34" fill="#0000ff"/>
<rect x="571" y="376" width="5" height="21" fill="#0000ff"/>
<rect x="581" y="289" width="1" height="91" fill="#0000ff"/>
<rect x="579" y="312" width="5" height="65" fill="#0000ff"/>
<rect x="589" y="281" width="1" height="44" fill="#0000ff"/>
<rect x="587" y="305" width="5" height="8" fill="#0000ff"/>
<rect x="597" y="305" width="1" height="36" fill="#ff0000"/>
<rect x="595" y="306" width="5" height="32" fill="#ff0000"/>
<rect x="605" y="331" width="1" height="60" fill="#ff0000"/>
<rect x="603" y="338" width="5" height="34" fill="#ff0000"/>
<rect x="613" y="349" width="1" height="34" fill="#0000ff"/>
<rect x="611" y="359" width="5" height="13" fill="#0000ff"/>
<rect x="621" y="324" width="1" height="70" fill="#ff0000"/>
<rect x="619" y="358" width="5" height="10" fill="#ff0000"/>
<rect x="629" y="329" width="1" height="101" fill="#ff0000"/>
<rect x="627" y="367" width="5" height="53" fill="#ff0000"/>
<rect x="637" y="371" width="1" height="77" fill="#ff0000"/>
<rect x="635" y="419" width="5" height="4" fill="#ff0000"/>
<rect x="645" y="398" width="1" height="57" fill="#ff0000"/>
<rect x="643" y="423" width="5" height="22" fill="#ff0000"/>
<rect x="653" y="421" width="1" height="28" fill="#ff0000"/>
<rect x="651" y="443" width="5" height="2" fill="#ff0000"/>
<rect x="661" y="430" width="1" height="34" fill="#0000ff"/>
<rect x="659" y="434" width="5" height="11" fill="#0000ff"/>
<rect x="669" y="424" width="1" height="24" fill="#ff0000"/>
<rect x="667" y="434" width="5" height="8" fill="#ff0000"/>
<rect x="677" y="420" width="1" height="29" fill="#0000ff"/>
<rect x="675" y="426" width="5" height="16" fill="#0000ff"/>
<rect x="685" y="420" width="1" height="32" fill="#ff0000"/>
<rect x="683" y="426" width="5" height="22" fill="#ff0000"/>
<rect x="693" y="433" width="1" height="25" fill="#ff0000"/>
<rect x="691" y="452" width="5" height="3" fill="#ff0000"/>
<rect x="701" y="439" width="1" height="16" fill="#0000ff"/>
<rect x="699" y="444" width="5" height="10" fill="#0000ff"/>
<rect x="709" y="427" width="1" height="41" fill="#ff0000"/>
<rect x="707" y="444" width="5" height="7" fill="#ff0000"/>
<rect x="717" y="412" width="1" height="39" fill="#0000ff"/>
<rect x="715" y="432" width="5" height="19" fill="#0000ff"/>
<rect x="725" y="424" width="1" height="21" fill="#ff0000"/>
<rect x="723" y="431" width="5" height="6" fill="#ff0000"/>
<rect x="733" y="411" width="1" height="27" fill="#0000ff"/>
<rect x="731" y="428" width="5" height="9" fill="#0000ff"/>
<rect x="741" y="426" width="1" height="14" fill="#ff0000"/>
<rect x="739" y="428" width="5" height="2" fill="#ff0000"/>
<rect x="749" y="428" width="1" height="34" fill="#ff0000"/>
<rect x="747" y="429" width="5" height="29" fill="#ff0000"/>
<rect x="757" y="435" width="1" height="31" fill="#0000ff"/>
<rect x="755" y="438" width="5" height="20" fill="#0000ff"/>
<rect x="765" y="424" width="1" height="76" fill="#ff0000"/>
<rect x="763" y="438" width="5" height="61" fill="#ff0000"/>
<rect x="773" y="480" width="1" height="30" fill="#0000ff"/>
<rect x="771" y="498" width="5" height="1" fill="#0000ff"/>
<rect x="781" y="478" width="1" height="26" fill="#0000ff"/>
<rect x="779" y="491" width="5" height="7" fill="#0000ff"/>
<rect x="789" y="471" width="1" height="33" fill="#0000ff"/>
<rect x="787" y="482" width="5" height="10" fill="#0000ff"/>
<rect x="797" y="466" width="1" height="35" fill="#ff0000"/>
<rect x="795" y="482" width="5" height="17" fill="#ff0000"/>
<rect x="805" y="489" width="1" height="52" fill="#ff0000"/>
<rect x="803" y="498" width="5" height="42" fill="#ff0000"/>
<rect x="813" y="528" width="1" height="43" fill="#ff0000"/>
<rect x="811" y="538" width="5" height="24" fill="#ff0000"/>
<rect x="821" y="545" width="1" height="54" fill="#0000ff"/>
<rect x="819" y="552" width="5" height="11" fill="#0000ff"/>
<rect x="829" y="499" width="1" height="65" fill="#0000ff"/>
<rect x="827" y="545" width="5" height="8" fill="#0000ff"/>
<rect x="837" y="459" width="1" height="95" fill="#0000ff"/>
<rect x="835" y="469" width="5" height="76" fill="#0000ff"/>
<rect x="845" y="459" width="1" height="62" fill="#ff0000"/>
<rect x="843" y="469" width="5" height="47" fill="#ff0000"/>
<rect x="853" y="457" width="1" height="81" fill="#ff0000"/>
<rect x="851" y="514" width="5" height="11" fill="#ff0000"/>
<rect x="861" y="516" width="1" height="27" fill="#0000ff"/>
<rect x="859" y="520" width="5" height="4" fill="#0000ff"/>
<rect x="869" y="501" width="1" height="27" fill="#0000ff"/>
<rect x="867" y="505" width="5" height="16" fill="#0000ff"/>
<rect x="877" y="501" width="1" height="19" fill="#0000ff"/>
<rect x="875" y="505" width="5" height="2" fill="#0000ff"/>
<rect x="885" y="507" width="1" height="35" fill="#0000ff"/>
<rect x="883" y="526" width="5" height="14" fill="#0000ff"/>
<rect x="893" y="526" width="1" height="42" fill="#ff0000"/>
<rect x="891" y="527" width="5" height="38" fill="#ff0000"/>
<rect x="901" y="549" width="1" height="36" fill="#0000ff"/>
<rect x="899" y="555" width="5" height="10" fill="#0000ff"/>
<rect x="909" y="538" width="1" height="23" fill="#ff0000"/>
<rect x="907" y="554" width="5" height="4" fill="#ff0000"/>
<rect x="917" y="554" width="1" height="22" fill="#ff0000"/>
<rect x="915" y="557" width="5" height="17" fill="#ff0000"/>
<rect x="925" y="554" width="1" height="25" fill="#0000ff"/>
<rect x="923" y="562" width="5" height="12" fill="#0000ff"/>
<rect x="933" y="550" width="1" height="18" fill="#0000ff"/>
<rect x="931" y="552" width="5" height="11" fill="#0000ff"/>
<rect x="941" y="528" width="1" height="30" fill="#0000ff"/>
<rect x="939" y="534" width="5" height="20" fill="#0000ff"/>
<rect x="949" y="512" width="1" height="28" fill="#0000ff"/>
<rect x="947" y="527" width="5" height="8" fill="#0000ff"/>
<rect x="957" y="484" width="1" height="51" fill="#0000ff"/>
<rect x="955" y="488" width="5" height="40" fill="#0000ff"/>
<rect x="965" y="440" width="1" height="53" fill="#0000ff"/>
<rect x="963" y="470" width="5" height="19" fill="#0000ff"/>
<rect x="973" y="466" width="1" height="41" fill="#ff0000"/>
<rect x="971" y="471" width="5" height="35" fill="#ff0000"/>
<rect x="981" y="479" width="1" height="38" fill="#0000ff"/>
<rect x="979" y="498" width="5" height="10" fill="#0000ff"/>
<rect x="989" y="476" width="1" height="36" fill="#0000ff"/>
<rect x="987" y="493" width="5" height="6" fill="#0000ff"/>
<rect x="997" y="476" width="1" height="53" fill="#ff0000"/>
<rect x="995" y="492" width="5" height="30" fill="#ff0000"/>
<rect x="1005" y="518" width="1" height="40" fill="#ff0000"/>
<rect x="1003" y="520" width="5" height="29" fill="#ff0000"/>
<rect x="1013" y="544" width="1" height="76" fill="#ff0000"/>
<rect x="1011" y="548" width="5" height="69" fill="#ff0000"/>
<rect x="1021" y="598" width="1" height="49" fill="#0000ff"/>
<rect x="1019" y="608" width="5" height="9" fill="#0000ff"/>
<rect x="1029" y="596" width="1" height="14" fill="#ff0000"/>
<rect x="1027" y="608" width="5" height="2" fill="#ff0000"/>
<path d="M4.5 662V101.5H1309.5V662.5H4" fill="none" stroke="#000" stroke-width="1"/>
<rect x="4" y="662" width="1306" height="1" fill="#000"/>
<path d="M1042 102h10l-5 5z" fill="#7a8ba0" shape-rendering="geometricPrecision"/>
<rect x="1310" y="118" width="2" height="1" fill="#000"/>
<rect x="1310" y="152" width="2" height="1" fill="#000"/>
<rect x="1310" y="186" width="2" height="1" fill="#000"/>
<rect x="1310" y="219" width="2" height="1" fill="#000"/>
<rect x="1310" y="253" width="2" height="1" fill="#000"/>
<rect x="1310" y="287" width="2" height="1" fill="#000"/>
<rect x="1310" y="321" width="2" height="1" fill="#000"/>
<rect x="1310" y="354" width="2" height="1" fill="#000"/>
<rect x="1310" y="388" width="2" height="1" fill="#000"/>
<rect x="1310" y="422" width="2" height="1" fill="#000"/>
<rect x="1310" y="455" width="2" height="1" fill="#000"/>
<rect x="1310" y="489" width="2" height="1" fill="#000"/>
<rect x="1310" y="523" width="2" height="1" fill="#000"/>
<rect x="1310" y="557" width="2" height="1" fill="#000"/>
<rect x="1310" y="590" width="2" height="1" fill="#000"/>
<rect x="1310" y="624" width="2" height="1" fill="#000"/>
<rect x="1310" y="658" width="2" height="1" fill="#000"/>
<rect x="5" y="663" width="1" height="3" fill="#000"/>
<rect x="69" y="663" width="1" height="3" fill="#000"/>
<rect x="133" y="663" width="1" height="3" fill="#000"/>
<rect x="197" y="663" width="1" height="3" fill="#000"/>
<rect x="261" y="663" width="1" height="3" fill="#000"/>
<rect x="325" y="663" width="1" height="3" fill="#000"/>
<rect x="389" y="663" width="1" height="3" fill="#000"/>
<rect x="453" y="663" width="1" height="3" fill="#000"/>
<rect x="517" y="663" width="1" height="3" fill="#000"/>
<rect x="581" y="663" width="1" height="3" fill="#000"/>
<rect x="645" y="663" width="1" height="3" fill="#000"/>
<rect x="709" y="663" width="1" height="3" fill="#000"/>
<rect x="773" y="663" width="1" height="3" fill="#000"/>
<rect x="837" y="663" width="1" height="3" fill="#000"/>
<rect x="901" y="663" width="1" height="3" fill="#000"/>
<rect x="965" y="663" width="1" height="3" fill="#000"/>
<rect x="1029" y="663" width="1" height="3" fill="#000"/>
</svg>
<div class="r" style="left:8px;top:108px;width:7px;height:1px;background:#000;"></div>
<div class="r" style="left:9px;top:109px;width:5px;height:1px;background:#000;"></div>
<div class="r" style="left:10px;top:110px;width:3px;height:1px;background:#000;"></div>
<div class="r" style="left:11px;top:111px;width:1px;height:1px;background:#000;"></div>
<span class="t" style="left:20.20px;top:105px;font-size:10px;color:#000;transform:scaleX(0.9110);-webkit-text-stroke:0.15px #000;">EURUSD_ecn,H1</span>
<span class="t" style="left:1124.60px;top:106px;font-size:10px;color:#000;transform:scaleX(0.9298);-webkit-text-stroke:0.15px #000;">Plne-automaticky-obchodni-system-ADF</span>
<svg style="left:1293px;top:105px" width="12" height="12" viewBox="0 0 12 12"><circle cx="6" cy="6" r="5.2" fill="none" stroke="#000" stroke-width="0.9"/><circle cx="4.2" cy="4.6" r="0.8"/><circle cx="7.8" cy="4.6" r="0.8"/><path d="M3.6 8.8Q6 6.4 8.4 8.8" fill="none" stroke="#000" stroke-width="0.9"/></svg>
<span class="t" style="left:1315.40px;top:114px;font-size:10px;color:#000;transform:scaleX(0.9129);-webkit-text-stroke:0.15px #000;">1.07620</span>
<span class="t" style="left:1315.40px;top:148px;font-size:10px;color:#000;transform:scaleX(0.9129);-webkit-text-stroke:0.15px #000;">1.07510</span>
<span class="t" style="left:1315.40px;top:182px;font-size:10px;color:#000;transform:scaleX(0.9129);-webkit-text-stroke:0.15px #000;">1.07400</span>
<span class="t" style="left:1315.40px;top:215px;font-size:10px;color:#000;transform:scaleX(0.9129);-webkit-text-stroke:0.15px #000;">1.07295</span>
<span class="t" style="left:1315.40px;top:249px;font-size:10px;color:#000;transform:scaleX(0.9129);-webkit-text-stroke:0.15px #000;">1.07185</span>
<span class="t" style="left:1315.40px;top:283px;font-size:10px;color:#000;transform:scaleX(0.9129);-webkit-text-stroke:0.15px #000;">1.07075</span>
<span class="t" style="left:1315.40px;top:317px;font-size:10px;color:#000;transform:scaleX(0.9129);-webkit-text-stroke:0.15px #000;">1.06965</span>
<span class="t" style="left:1315.40px;top:350px;font-size:10px;color:#000;transform:scaleX(0.9129);-webkit-text-stroke:0.15px #000;">1.06860</span>
<span class="t" style="left:1315.40px;top:384px;font-size:10px;color:#000;transform:scaleX(0.9129);-webkit-text-stroke:0.15px #000;">1.06750</span>
<span class="t" style="left:1315.40px;top:418px;font-size:10px;color:#000;transform:scaleX(0.9129);-webkit-text-stroke:0.15px #000;">1.06640</span>
<span class="t" style="left:1315.40px;top:451px;font-size:10px;color:#000;transform:scaleX(0.9129);-webkit-text-stroke:0.15px #000;">1.06535</span>
<span class="t" style="left:1315.40px;top:485px;font-size:10px;color:#000;transform:scaleX(0.9129);-webkit-text-stroke:0.15px #000;">1.06425</span>
<span class="t" style="left:1315.40px;top:519px;font-size:10px;color:#000;transform:scaleX(0.9129);-webkit-text-stroke:0.15px #000;">1.06315</span>
<span class="t" style="left:1315.40px;top:553px;font-size:10px;color:#000;transform:scaleX(0.9129);-webkit-text-stroke:0.15px #000;">1.06205</span>
<span class="t" style="left:1315.40px;top:586px;font-size:10px;color:#000;transform:scaleX(0.9129);-webkit-text-stroke:0.15px #000;">1.06100</span>
<span class="t" style="left:1315.40px;top:620px;font-size:10px;color:#000;transform:scaleX(0.9129);-webkit-text-stroke:0.15px #000;">1.05990</span>
<span class="t" style="left:1315.40px;top:654px;font-size:10px;color:#000;transform:scaleX(0.9129);-webkit-text-stroke:0.15px #000;">1.05880</span>
<div class="r" style="left:1311px;top:604px;width:41px;height:11px;background:#000;"></div>
<span class="t" style="left:1315.40px;top:605px;font-size:10px;color:#fff;transform:scaleX(0.9129);">1.06040</span>
<div class="r" style="left:1311px;top:615px;width:41px;height:11px;background:#228b22;"></div>
<span class="t" style="left:1315.40px;top:616px;font-size:10px;color:#fff;transform:scaleX(0.9129);">1.06000</span>
<span class="t" style="left:11.50px;top:549px;font-size:10px;color:#000;transform:scaleX(0.9400);-webkit-text-stroke:0.15px #000;">#13238382 tp</span>
<span class="t" style="left:11.50px;top:574px;font-size:10px;color:#000;transform:scaleX(0.9400);-webkit-text-stroke:0.15px #000;">#13235960 tp</span>
<span class="t" style="left:11.50px;top:583px;font-size:10px;color:#000;transform:scaleX(0.9435);-webkit-text-stroke:0.15px #000;">#13238382 buy stop 0.24</span>
<span class="t" style="left:11.50px;top:611px;font-size:10px;color:#000;transform:scaleX(0.9485);-webkit-text-stroke:0.15px #000;">#13235960 buy 0.28</span>
<span class="t" style="left:11.50px;top:641px;font-size:10px;color:#000;transform:scaleX(0.9241);-webkit-text-stroke:0.15px #000;">#13238382 sl</span>
<span class="t" style="left:773.00px;top:618px;font-size:13px;color:#228b22;transform:scaleX(0.9942);-webkit-text-stroke:0.25px #228b22;">institucionální poptávka o středním objemu</span>
<span class="t" style="left:5.10px;top:667px;font-size:10px;color:#000;transform:scaleX(0.9210);-webkit-text-stroke:0.15px #000;">6 Feb 2017</span>
<span class="t" style="left:69.10px;top:667px;font-size:10px;color:#000;transform:scaleX(0.9368);-webkit-text-stroke:0.15px #000;">6 Feb 18:00</span>
<span class="t" style="left:133.10px;top:667px;font-size:10px;color:#000;transform:scaleX(0.9368);-webkit-text-stroke:0.15px #000;">7 Feb 02:00</span>
<span class="t" style="left:197.10px;top:667px;font-size:10px;color:#000;transform:scaleX(0.9368);-webkit-text-stroke:0.15px #000;">7 Feb 10:00</span>
<span class="t" style="left:261.10px;top:667px;font-size:10px;color:#000;transform:scaleX(0.9368);-webkit-text-stroke:0.15px #000;">7 Feb 18:00</span>
<span class="t" style="left:325.10px;top:667px;font-size:10px;color:#000;transform:scaleX(0.9368);-webkit-text-stroke:0.15px #000;">8 Feb 02:00</span>
<span class="t" style="left:389.10px;top:667px;font-size:10px;color:#000;transform:scaleX(0.9368);-webkit-text-stroke:0.15px #000;">8 Feb 10:00</span>
<span class="t" style="left:453.10px;top:667px;font-size:10px;color:#000;transform:scaleX(0.9368);-webkit-text-stroke:0.15px #000;">8 Feb 18:00</span>
<span class="t" style="left:517.10px;top:667px;font-size:10px;color:#000;transform:scaleX(0.9368);-webkit-text-stroke:0.15px #000;">9 Feb 02:00</span>
<span class="t" style="left:581.10px;top:667px;font-size:10px;color:#000;transform:scaleX(0.9368);-webkit-text-stroke:0.15px #000;">9 Feb 10:00</span>
<span class="t" style="left:645.10px;top:667px;font-size:10px;color:#000;transform:scaleX(0.9368);-webkit-text-stroke:0.15px #000;">9 Feb 18:00</span>
<span class="t" style="left:709.10px;top:667px;font-size:10px;color:#000;transform:scaleX(0.9230);-webkit-text-stroke:0.15px #000;">10 Feb 02:00</span>
<span class="t" style="left:773.10px;top:667px;font-size:10px;color:#000;transform:scaleX(0.9230);-webkit-text-stroke:0.15px #000;">10 Feb 10:00</span>
<span class="t" style="left:837.10px;top:667px;font-size:10px;color:#000;transform:scaleX(0.9230);-webkit-text-stroke:0.15px #000;">10 Feb 18:00</span>
<span class="t" style="left:901.10px;top:667px;font-size:10px;color:#000;transform:scaleX(0.9230);-webkit-text-stroke:0.15px #000;">13 Feb 02:00</span>
<span class="t" style="left:965.10px;top:667px;font-size:10px;color:#000;transform:scaleX(0.9230);-webkit-text-stroke:0.15px #000;">13 Feb 10:00</span>
<span class="t" style="left:1029.10px;top:667px;font-size:10px;color:#000;transform:scaleX(0.9230);-webkit-text-stroke:0.15px #000;">13 Feb 18:00</span>
<div class="r" style="left:354px;top:102px;width:81px;height:19px;background:rgba(0,0,0,0.28);filter:blur(1.2px)"></div>
<div class="r" style="left:351px;top:99px;width:82px;height:20px;background:#fff;border:1px solid #767676"></div>
<span class="t" style="left:357.40px;top:103px;font-size:12px;color:#575757;transform:scaleX(1.0126);">5 minut (M5)</span>
<div class="r" style="left:0px;top:685px;width:1366px;height:1px;background:#000;"></div>
<div class="r" style="left:0px;top:686px;width:1366px;height:20px;background:#f0f0f0;"></div>
<div class="r" style="left:0px;top:705px;width:1366px;height:1px;background:#fff;"></div>
<div class="r" style="left:6px;top:685px;width:108px;height:19px;background:#fff;border:1px solid #000;border-top:none"></div>
<div class="r" style="left:0px;top:686px;width:1px;height:18px;background:#a0a0a0;"></div>
<div class="r" style="left:1px;top:686px;width:1px;height:18px;background:#696969;"></div>
<span class="t" style="left:17.60px;top:689px;font-size:12px;color:#000;transform:scaleX(0.8787);">EURUSD_ecn,H1</span>
<span class="t" style="left:125.60px;top:689px;font-size:12px;color:#6d6d6d;transform:scaleX(0.8891);">GBPUSD_ecn,H1</span>
<span class="t" style="left:233.00px;top:689px;font-size:12px;color:#6d6d6d;transform:scaleX(0.8844);">USDJPY_ecn,H1</span>
<span class="t" style="left:338.00px;top:689px;font-size:12px;color:#6d6d6d;transform:scaleX(0.9185);">AUDUSD_ecn,H1</span>
<span class="t" style="left:450.20px;top:689px;font-size:12px;color:#6d6d6d;transform:scaleX(0.9061);">CADJPY_ecn,H1</span>
<span class="t" style="left:557.00px;top:689px;font-size:12px;color:#6d6d6d;transform:scaleX(0.8876);">GBPJPY_ecn,H1</span>
<span class="t" style="left:661.00px;top:689px;font-size:12px;color:#6d6d6d;transform:scaleX(0.9047);">GBPUSD,Daily</span>
<span class="t" style="left:757.00px;top:689px;font-size:12px;color:#6d6d6d;transform:scaleX(0.8767);">EURUSD,H1</span>
<div class="r" style="left:222px;top:688px;width:1px;height:14px;background:#6d6d6d;"></div>
<div class="r" style="left:326px;top:688px;width:1px;height:14px;background:#6d6d6d;"></div>
<div class="r" style="left:438px;top:688px;width:1px;height:14px;background:#6d6d6d;"></div>
<div class="r" style="left:546px;top:688px;width:1px;height:14px;background:#6d6d6d;"></div>
<div class="r" style="left:650px;top:688px;width:1px;height:14px;background:#6d6d6d;"></div>
<div class="r" style="left:746px;top:688px;width:1px;height:14px;background:#6d6d6d;"></div>
<div class="r" style="left:830px;top:688px;width:1px;height:14px;background:#6d6d6d;"></div>
<svg style="left:1334px;top:690px" width="24" height="8" viewBox="0 0 24 8"><path d="M4 0v7l-4-3.5z M19 0v7l4-3.5z" fill="#9a9a9a"/></svg>
<div class="r" style="left:0px;top:706px;width:1366px;height:22px;background:#f0f0f0;"></div>
<span class="t" style="left:2.40px;top:712px;font-size:12px;color:#000;transform:scaleX(1.0097);">5 minut (M5)</span>
<span class="t" style="left:678.40px;top:712px;font-size:12px;color:#000;transform:scaleX(0.9889);">Default</span>
<span class="t" style="left:1270.00px;top:712px;font-size:12px;color:#000;transform:scaleX(0.9430);">13583/2 kb</span>
<div class="r" style="left:672px;top:709px;width:1px;height:18px;background:#9a9a9a;"></div>
<div class="r" style="left:788px;top:709px;width:1px;height:18px;background:#9a9a9a;"></div>
<div class="r" style="left:890px;top:709px;width:1px;height:18px;background:#9a9a9a;"></div>
<div class="r" style="left:961px;top:709px;width:1px;height:18px;background:#9a9a9a;"></div>
<div class="r" style="left:1032px;top:709px;width:1px;height:18px;background:#9a9a9a;"></div>
<div class="r" style="left:1100px;top:709px;width:1px;height:18px;background:#9a9a9a;"></div>
<div class="r" style="left:1170px;top:709px;width:1px;height:18px;background:#9a9a9a;"></div>
<div class="r" style="left:1236px;top:709px;width:1px;height:18px;background:#9a9a9a;"></div>
<svg style="left:1242px;top:711px" width="24" height="13" viewBox="0 0 24 13" shape-rendering="crispEdges"><rect x="0" y="0" width="2" height="9" fill="#557d00"/><rect x="0" y="10" width="2" height="3" fill="#8b0000"/><rect x="3" y="0" width="2" height="8" fill="#557d00"/><rect x="3" y="9" width="2" height="4" fill="#8b0000"/><rect x="6" y="0" width="2" height="7" fill="#557d00"/><rect x="6" y="8" width="2" height="5" fill="#8b0000"/><rect x="9" y="0" width="2" height="6" fill="#557d00"/><rect x="9" y="7" width="2" height="6" fill="#8b0000"/><rect x="12" y="0" width="2" height="5" fill="#557d00"/><rect x="12" y="6" width="2" height="7" fill="#8b0000"/><rect x="15" y="0" width="2" height="4" fill="#557d00"/><rect x="15" y="5" width="2" height="8" fill="#8b0000"/><rect x="18" y="0" width="2" height="3" fill="#557d00"/><rect x="18" y="4" width="2" height="9" fill="#8b0000"/><rect x="21" y="0" width="2" height="2" fill="#557d00"/><rect x="21" y="3" width="2" height="10" fill="#8b0000"/></svg>
<span class="t" style="left:976.50px;top:634px;font-size:19px;color:rgba(120,120,120,0.37);transform:scaleX(1.0612);">Aktivovat Windows</span>
<span class="t" style="left:976.30px;top:659px;font-size:14.7px;color:rgba(120,120,120,0.37);transform:scaleX(1.0099);">Přejděte do aplikace Nastavení počítače a aktivujte</span>
<span class="t" style="left:976.30px;top:678px;font-size:14.7px;color:rgba(120,120,120,0.37);transform:scaleX(0.9934);">Windows.</span>
<svg style="left:0;top:728px" width="1366" height="40" viewBox="0 0 1366 40"><defs><linearGradient id="tbg" x1="0" x2="1" y1="0" y2="0"><stop offset="0" stop-color="#96818d"/><stop offset="0.500" stop-color="#94808c"/><stop offset="0.740" stop-color="#97838f"/></linearGradient><linearGradient id="band" gradientUnits="userSpaceOnUse" x1="1011" y1="0" x2="1017.9" y2="-14.4"><stop offset="0" stop-color="#7c6a7c"/><stop offset="0.120" stop-color="#5c4c64"/><stop offset="0.450" stop-color="#5e4058"/><stop offset="0.620" stop-color="#6c2c40"/><stop offset="0.900" stop-color="#70283c"/><stop offset="1" stop-color="#5a5070"/></linearGradient><linearGradient id="edge" gradientUnits="userSpaceOnUse" x1="1045" y1="0" x2="1051" y2="-12.600"><stop offset="0" stop-color="#507c9a"/><stop offset="0.250" stop-color="#6c7c98"/><stop offset="1" stop-color="#7a7289"/></linearGradient><linearGradient id="rbg" x1="0" x2="1" y1="0" y2="0"><stop offset="0" stop-color="#7b7389"/><stop offset="1" stop-color="#787086"/></linearGradient><linearGradient id="stm" x1="0" x2="0" y1="0" y2="1"><stop offset="0" stop-color="#111d2e"/><stop offset="0.500" stop-color="#0b3a72"/><stop offset="1" stop-color="#1387b8"/></linearGradient></defs><rect x="0" y="0" width="1366" height="40" fill="url(#tbg)"/><path d="M1044 0H1366V40H1124z" fill="url(#rbg)"/><path d="M1044 0H1078L1160 40H1124z" fill="url(#edge)"/><path d="M1011 0H1046L1126 40H1098z" fill="url(#band)"/><defs><linearGradient id="tvg" x1="0" x2="0" y1="0" y2="1"><stop offset="0" stop-color="#fff" stop-opacity="0.05"/><stop offset="1" stop-color="#000" stop-opacity="0.035"/></linearGradient></defs><rect x="0" y="0" width="1366" height="40" fill="url(#tvg)"/><rect x="0" y="0" width="1366" height="1" fill="#000" fill-opacity="0.08"/><path d="M12 10.500l11-1.600v9.600h-11z M24.200 8.700l13.800-2v11.800h-13.800z M12 19.700h11v9.600l-11-1.600z M24.200 19.700h13.800v11.800l-13.800-2z" fill="#fff"/><rect x="176" y="1" width="58" height="39" fill="#ffffff" fill-opacity="0.220"/><rect x="176.5" y="1.500" width="57" height="38" fill="none" stroke="#ffffff" stroke-opacity="0.180"/><rect x="238" y="1" width="58" height="39" fill="#ffffff" fill-opacity="0.220"/><rect x="238.5" y="1.500" width="57" height="38" fill="none" stroke="#ffffff" stroke-opacity="0.180"/><rect x="362" y="1" width="58" height="39" fill="#ffffff" fill-opacity="0.220"/><rect x="362.5" y="1.500" width="57" height="38" fill="none" stroke="#ffffff" stroke-opacity="0.180"/><rect x="300" y="1" width="58" height="39" fill="#ffffff" fill-opacity="0.400"/><rect x="300.500" y="1.500" width="57" height="38" fill="none" stroke="#ffffff" stroke-opacity="0.550"/><defs><linearGradient id="ieg" x1="0" x2="0" y1="0" y2="1"><stop offset="0" stop-color="#86d6fa"/><stop offset="0.500" stop-color="#3db0f0"/><stop offset="1" stop-color="#1f90e4"/></linearGradient><linearGradient id="fog" x1="0" x2="0" y1="0" y2="1"><stop offset="0" stop-color="#fbf0b8"/><stop offset="1" stop-color="#f3d978"/></linearGradient><linearGradient id="stg" x1="0" x2="0" y1="0" y2="1"><stop offset="0" stop-color="#b4e2f8"/><stop offset="1" stop-color="#4aa6e0"/></linearGradient></defs><circle cx="82.300" cy="19.800" r="13.600" fill="url(#ieg)"/><path d="M75.400 18A7 6.800 0 0 1 89.400 18z" fill="#95818d"/><path d="M75 24.200H97V28.300L90.800 27Q86.500 30.800 81.500 29.800Q76.200 28.600 75 24.200z" fill="#95818d"/><path d="M68.800 32.300Q62 26 70 16Q80 4.700 92 4.400Q96.600 4.700 95 8.600" fill="none" stroke="#f2b918" stroke-width="2.700" stroke-linecap="round"/><path d="M68.600 30.500Q63.500 25.500 70.600 16.600Q80 5.800 91.500 5.200" fill="none" stroke="#fbe060" stroke-width="0.900" stroke-linecap="round"/><path d="M127.500 9q0-1.500 1.500-1.500h12q1 0 1.500 1l.800 1h13.500q1.500 0 1.500 1.500v21q0 1.500-1.500 1.500h-27.800q-1.500 0-1.500-1.500z" fill="#f1d77a" stroke="#d0ae48" stroke-width="0.800"/><rect x="130.700" y="7.900" width="3.300" height="2.100" fill="#1eb43c"/><rect x="134" y="7.900" width="5" height="2.100" fill="#fbfbfb"/><rect x="139" y="9.900" width="3" height="1.900" fill="#e03a2e"/><rect x="142" y="9.900" width="5" height="1.900" fill="#fbfbfb"/><path d="M128.300 15.500q0-1.300 1.300-1.300h14.400l1.800-2.400h11.200q1.300 0 1.300 1.300v18.900q0 1.300-1.300 1.300h-27.400q-1.300 0-1.300-1.300z" fill="url(#fog)" stroke="#dcc060" stroke-width="0.600"/><rect x="147.200" y="12.100" width="3.300" height="1.900" fill="#2a90f0"/><rect x="150.500" y="12.100" width="4.800" height="1.900" fill="#fbfbfb"/><path d="M131.200 24.500q0-1.500 1.500-1.500h20.700q1.500 0 1.500 1.500v10q0 1-1 1h-4q-1 0-1-1v-6h-11.500v6q0 1-1 1h-4q-1 0-1-1z" fill="url(#stg)" stroke="#3c8ecc" stroke-width="0.800"/><path d="M132.500 24.300h20.500" stroke="#e4f4fd" stroke-width="1"/><circle cx="204.5" cy="20.1" r="14.9" fill="#e8b730"/><path d="M204.50 15.10L218.54 15.10A14.9 14.9 0 0 0 193.15 10.44L200.17 22.60z" fill="#dd4b3c"/><path d="M208.83 22.60L201.81 34.76A14.9 14.9 0 0 0 218.54 15.10L204.50 15.10z" fill="#fdd23c"/><path d="M200.17 22.60L193.15 10.44A14.9 14.9 0 0 0 201.81 34.76L208.83 22.60z" fill="#1a9e5c"/><circle cx="204.5" cy="20.1" r="6.900" fill="#f4f4f4"/><circle cx="204.5" cy="20.1" r="5.500" fill="#4a8af4"/><rect x="251.500" y="4.500" width="31.500" height="30.500" fill="#0c2244"/><circle cx="267" cy="20" r="7.500" fill="none" stroke="#fff" stroke-width="2.200"/><ellipse cx="267" cy="20" rx="11" ry="3.500" fill="none" stroke="#fff" stroke-width="1.600" transform="rotate(-28 267 20)"/><path d="M263 22l4-3 1 3 3-3" stroke="#fff" stroke-width="1.500" fill="none"/><defs><linearGradient id="ptg" x1="0" x2="1" y1="0" y2="0"><stop offset="0" stop-color="#55247a"/><stop offset="0.45" stop-color="#6c2e8e"/><stop offset="1" stop-color="#8c42a4"/></linearGradient><linearGradient id="pty" gradientUnits="userSpaceOnUse" x1="316" y1="12" x2="325" y2="8"><stop offset="0" stop-color="#ece010"/><stop offset="0.45" stop-color="#b4cc18"/><stop offset="1" stop-color="#2a962c"/></linearGradient></defs><path d="M313.800 7.100H323L336 32.400L334.300 31z" fill="url(#pty)"/><path d="M322.800 7.100H339.500Q345 7.300 344.800 13Q344.300 18.500 340.500 23Q337 27.500 336 32.400z" fill="url(#ptg)"/><circle cx="391" cy="20" r="15" fill="url(#stm)"/><circle cx="397" cy="15.500" r="5" fill="none" stroke="#fff" stroke-width="1.800"/><circle cx="397" cy="15.500" r="2.600" fill="#fff" fill-opacity="0.500"/><path d="M376.500 20.500l9 3.800 7-5 3 4.500-6.500 4.500q-1.500 4-5.500 3t-3.800-4.600l-4.500-2z" fill="#fff"/><circle cx="385.500" cy="26.500" r="2.700" fill="#1a4a80"/><path d="M1142.300 23.900h8.400l-4.200-5z" fill="#fff"/><path d="M1164.500 14v15" stroke="#fff" stroke-width="1.600"/><path d="M1166 15h5q2 2 4 1l3.500 .500-2 6q-2 .500-4-.500h-6.500z" fill="#fff"/><rect x="1193.500" y="15.500" width="9" height="13" rx="1" fill="none" stroke="#fff" stroke-width="1.400"/><rect x="1196" y="13.500" width="4" height="2" fill="#fff"/><rect x="1195.500" y="21" width="5" height="6" fill="#fff"/><rect x="1211.0" y="25.5" width="2.200" height="2" fill="#fff"/><rect x="1214.4" y="24.0" width="2.200" height="3.5" fill="#fff"/><rect x="1217.8" y="22.0" width="2.200" height="5.5" fill="#fff"/><rect x="1221.2" y="19.5" width="2.200" height="8" fill="#fff"/><rect x="1224.6" y="17.0" width="2.200" height="10.5" fill="#fff"/><path d="M1235.500 18.300h2.800l4.200-4v13.400l-4.200-4h-2.800z" fill="#f4f4f4" stroke="#fff" stroke-width="0.800"/><path d="M1245.200 18.200q1.600 2.800 0 5.600m2.400-7.800q2.800 5 0 10" fill="none" stroke="#fff" stroke-width="1.200"/></svg>
<span class="t" style="left:1267.00px;top:743px;font-size:12px;color:#fff;transform:scaleX(0.8376);">SLK</span>
<span class="t" style="left:1313.60px;top:735px;font-size:12px;color:#fff;transform:scaleX(0.8458);">17:01</span>
<span class="t" style="left:1302.60px;top:752px;font-size:12px;color:#fff;transform:scaleX(0.8879);">13.2.2017</span>
</div></body></html>
